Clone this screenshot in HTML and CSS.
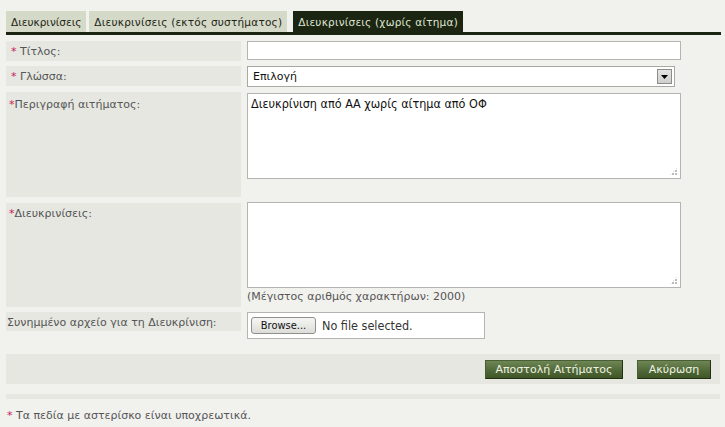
FILE: index.html
```html
<!DOCTYPE html>
<html lang="el">
<head>
<meta charset="utf-8">
<title>Διευκρινίσεις</title>
<link rel="stylesheet" href="styles.css">
</head>
<body>
<div class="page">
  <div class="tabs">
    <div class="tab">Διευκρινίσεις</div>
    <div class="tab wide">Διευκρινίσεις (εκτός συστήματος)</div>
    <div class="tab wide active">Διευκρινίσεις (χωρίς αίτημα)</div>
  </div>
  <div class="form">
    <div class="row r-title">
      <div class="label"><span class="req">*</span> Τίτλος:</div>
      <div class="field"><div class="input"></div></div>
    </div>
    <div class="row r-lang">
      <div class="label"><span class="req">*</span> Γλώσσα:</div>
      <div class="field">
        <div class="select"><span>Επιλογή</span><span class="arrow"><svg width="7" height="4" viewBox="0 0 7 4"><path d="M0 0H7L3.5 4Z" fill="#000"/></svg></span></div>
      </div>
    </div>
    <div class="row r-desc">
      <div class="label"><span class="req">*</span>Περιγραφή αιτήματος:</div>
      <div class="field">
        <div class="area">Διευκρίνιση από ΑΑ χωρίς αίτημα από ΟΦ<span class="grip"></span></div>
      </div>
    </div>
    <div class="row r-clar">
      <div class="label"><span class="req">*</span>Διευκρινίσεις:</div>
      <div class="field">
        <div class="area"><span class="grip"></span></div>
        <div class="hint">(Μέγιστος αριθμός χαρακτήρων: 2000)</div>
      </div>
    </div>
    <div class="row r-file">
      <div class="label">Συνημμένο αρχείο για τη Διευκρίνιση:</div>
      <div class="field">
        <div class="file"><span class="browse">Browse...</span><span class="nofile">No file selected.</span></div>
      </div>
    </div>
  </div>
  <div class="actions">
    <span class="btn">Αποστολή Αιτήματος</span>
    <span class="btn">Ακύρωση</span>
  </div>
  <div class="strip"></div>
  <p class="note"><span class="req">*</span> Τα πεδία με αστερίσκο είναι υποχρεωτικά.</p>
</div>
</body>
</html>
```
FILE: styles.css
```css
html, body {
  margin: 0;
  padding: 0;
  background: #f1f1ee;
}
body {
  font-family: "DejaVu Sans", sans-serif;
  font-size: 11px;
  color: #555;
}
.page {
  width: 715px;
  padding: 11px 0 0 6px;
}
.tabs {
  display: flex;
  align-items: flex-end;
  border-bottom: 3px solid #1c2412;
  height: 21px;
}
.tab {
  height: 21px;
  line-height: 22px;
  padding: 0 5px;
  margin-right: 3px;
  background: #d5d9c7;
  color: #1d2415;
  font-size: 10.5px;
}
.tab.wide { letter-spacing: 0.22px; }
.tab.active {
  margin-left: 3px;
  background: #1c2412;
  color: #dfe6d2;
}
.form {
  margin-top: 6px;
  display: flex;
  flex-direction: column;
  gap: 5px;
}
.row {
  display: flex;
  gap: 6px;
  align-items: flex-start;
}
.label {
  width: 235px;
  flex: none;
  box-sizing: border-box;
  padding: 4px 4px 0 5px;
  background: #e6e7e1;
  line-height: 13px;
}
.req { color: #c8205a; }
.r-title .label, .r-lang .label { height: 20px; }
.r-desc .label { height: 105px; padding-left: 3px; padding-top: 6px; }
.r-clar .label { height: 104px; padding-left: 3px; margin-top: 1px; padding-top: 4px; }
.r-file .label { height: 19px; padding-left: 1px; padding-top: 4px; }
.input {
  width: 434px;
  height: 19px;
  box-sizing: border-box;
  border: 1px solid #b4b4b0;
  background: #fff;
}
.select {
  width: 428px;
  height: 21px;
  box-sizing: border-box;
  border: 1px solid #a8a8a4;
  background: #fff;
  display: flex;
  align-items: center;
  justify-content: space-between;
  padding: 0 2px 0 5px;
  color: #111;
}
.arrow {
  width: 15px;
  height: 15px;
  box-sizing: border-box;
  border: 1px solid #8c8c8a;
  background: linear-gradient(#e4e4e2, #cfcfcc);
  display: flex;
  align-items: center;
  justify-content: center;
}
.r-desc .field { padding-top: 1px; }
.area {
  position: relative;
  width: 434px;
  height: 86px;
  box-sizing: border-box;
  border: 1px solid #b4b4b0;
  background: #fff;
  padding: 2px 3px;
  color: #111;
  font-family: "DejaVu Sans Condensed", "DejaVu Sans", sans-serif;
  font-size: 12.5px;
}
.grip {
  position: absolute;
  right: 2px;
  bottom: 2px;
  width: 9px;
  height: 9px;
}
.grip::before {
  content: "";
  position: absolute;
  inset: 0;
  background-image: radial-gradient(circle at 1px 1px, #bcbcbc 1px, transparent 1.1px);
  background-size: 3px 3px;
  clip-path: polygon(100% 0, 100% 100%, 0 100%);
}
.hint {
  margin-top: 2px;
  height: 14px;
  line-height: 14px;
}
.file {
  width: 238px;
  height: 27px;
  box-sizing: border-box;
  border: 1px solid #b4b4b0;
  background: #fff;
  display: flex;
  align-items: center;
  padding-left: 3px;
  gap: 6px;
  color: #333;
  font-family: "DejaVu Sans Condensed", "DejaVu Sans", sans-serif;
  font-size: 12.5px;
}
.browse {
  width: 65px;
  height: 17px;
  box-sizing: border-box;
  border: 1px solid #8f8f8c;
  border-radius: 3px;
  background: linear-gradient(#f6f6f4, #dcdcd8);
  font-size: 11px;
  color: #111;
  display: flex;
  align-items: center;
  justify-content: center;
}
.actions {
  margin-top: 15px;
  height: 30px;
  width: 714px;
  background: #e6e7e1;
  display: flex;
  justify-content: flex-end;
  align-items: center;
  gap: 14px;
  padding-right: 9px;
  box-sizing: border-box;
}
.btn {
  height: 19px;
  line-height: 18px;
  box-sizing: border-box;
  background: linear-gradient(#6e8654, #4f6736 60%, #3f5628);
  border: 1px solid #22300f;
  border-top-color: #4a5e36;
  border-left-color: #4a5e36;
  color: #eef3e4;
  text-align: center;
}
.btn:first-child { width: 138px; }
.btn:last-child { width: 74px; }
.strip {
  margin-top: 10px;
  width: 714px;
  height: 5px;
  background: #e6e7e1;
}
.note {
  margin: 10px 0 0 1px;
  line-height: 14px;
}
```
